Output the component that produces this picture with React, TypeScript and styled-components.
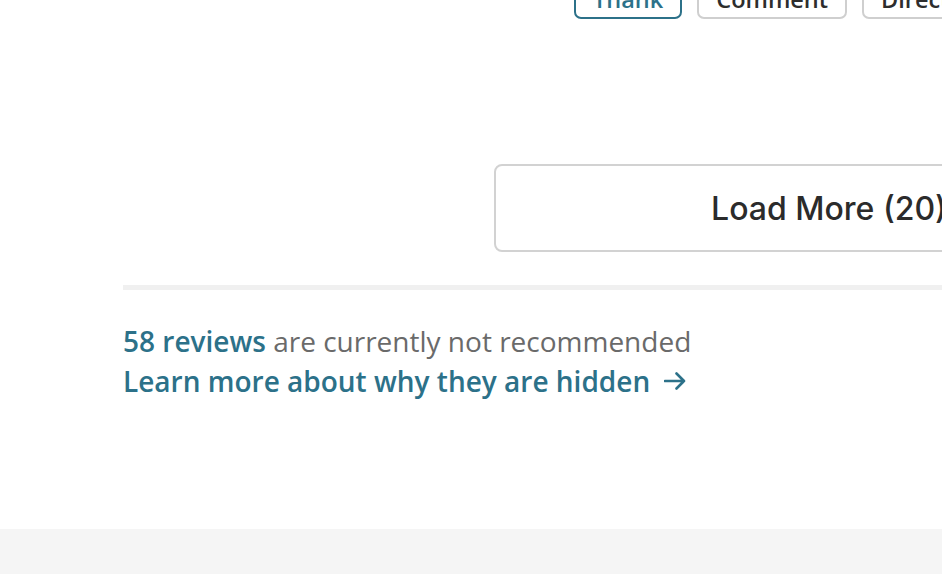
import styled, { createGlobalStyle } from "styled-components";

const GlobalStyle = createGlobalStyle`
    html, body {
        margin: 0;
        padding: 0;
        background: #ffffff;
        overflow: hidden;
    }
`;

const Page = styled.div`
    width: 1300px;
    margin-top: -22px;
`;

const Content = styled.section`
    width: 1052px;
    margin-left: 123px;
    display: flex;
    flex-direction: column;
`;

const ActionRow = styled.div`
    display: flex;
    gap: 15px;
    padding-left: 451px;
`;

const ActionButton = styled.button<{ primary?: boolean }>`
    height: 41px;
    padding: 0 17px;
    border-radius: 7px;
    background: #ffffff;
    border: 2px solid ${props => (props.primary ? "#2c7189" : "#cfcfcf")};
    color: ${props => (props.primary ? "#2c7189" : "#2d2d2d")};
    font: 600 23.5px "Open Sans", sans-serif;
    white-space: nowrap;
`;

const LoadRow = styled.div`
    display: flex;
    margin-top: 145px;
    padding-left: 371px;
`;

const LoadMoreButton = styled.button`
    width: 670px;
    height: 88px;
    border: 2px solid #d2d2d2;
    border-radius: 8px;
    background: #ffffff;
    color: #2b2b2b;
    font: 500 32px Inter, "Noto Sans", sans-serif;
    white-space: nowrap;
`;

const Divider = styled.hr`
    margin: 33px 0 0 0;
    height: 5px;
    border: none;
    background: #f0f0f0;
`;

const Notice = styled.div`
    margin-top: 31px;
    font: 400 28px/40px "Open Sans", sans-serif;
    color: #6a6a6a;
`;

const Highlight = styled.a`
    color: #2c7189;
    font-weight: 600;
    text-decoration: none;
`;

const LinkLine = styled(Highlight)`
    display: inline-flex;
    align-items: center;
    gap: 14px;
`;

const Footer = styled.footer`
    margin-top: 128px;
    height: 200px;
    background: #f5f5f5;
`;

const ArrowIcon = () => (
    <svg width="22" height="18" viewBox="0 0 22 18" fill="none">
        <path
            d="M1 9h19M12.5 1.5L20 9l-7.5 7.5"
            stroke="#2c7189"
            strokeWidth="2.6"
            strokeLinecap="round"
            strokeLinejoin="round"
        />
    </svg>
);

export default function App() {
    return (
        <>
            <GlobalStyle />
            <Page>
                <Content>
                    <ActionRow>
                        <ActionButton primary>Thank</ActionButton>
                        <ActionButton>Comment</ActionButton>
                        <ActionButton>Direct Message</ActionButton>
                    </ActionRow>

                    <LoadRow>
                        <LoadMoreButton>Load More (20)</LoadMoreButton>
                    </LoadRow>

                    <Divider />

                    <Notice>
                        <div>
                            <Highlight href="#">58 reviews</Highlight> are currently not recommended
                        </div>
                        <div>
                            <LinkLine href="#">
                                Learn more about why they are hidden
                                <ArrowIcon />
                            </LinkLine>
                        </div>
                    </Notice>
                </Content>
                <Footer />
            </Page>
        </>
    );
}
